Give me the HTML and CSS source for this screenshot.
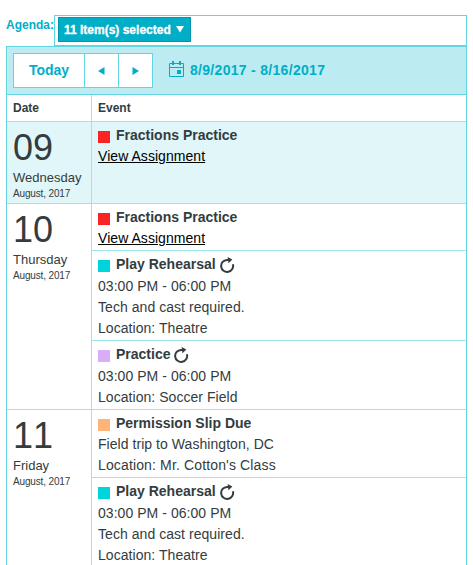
FILE: index.html
```
<!DOCTYPE html>
<html lang="en">
<head>
<meta charset="utf-8">
<title>Agenda</title>
<link rel="stylesheet" href="styles.css">
</head>
<body>
<svg width="0" height="0" class="defs">
  <symbol id="repeat" viewBox="0 0 16 17">
    <path d="M8 3.9H7A6 6 0 1 0 12.9 8.2" fill="none" stroke="#333c3e" stroke-width="2"/>
    <path d="M7.6 .9L12.4 3.6L8.4 7.2Z" fill="#333c3e"/>
  </symbol>
</svg>
<div class="filter">
  <label class="filter-label"><span class="t">Agenda:</span></label>
  <div class="filter-box"><button class="select"><span class="t select-text">11 Item(s) selected</span><svg class="caret" width="8" height="7" viewBox="0 0 8 7"><path d="M0 0h8L4 6.5z" fill="#fff"/></svg></button></div>
</div>
<main class="panel">
  <div class="toolbar">
    <div class="nav">
      <button class="today"><span class="t">Today</span></button>
      <button class="step"><svg width="7" height="8" viewBox="0 0 7 8"><path d="M6.5 0v8L0 4z" fill="#00aec7"/></svg></button>
      <button class="step"><svg width="7" height="8" viewBox="0 0 7 8"><path d="M.5 0v8L7 4z" fill="#00aec7"/></svg></button>
    </div>
    <svg class="cal" width="15" height="16" viewBox="0 0 15 16"><path d="M.5 2.5h14v13H.5zM.5 6.5h14" fill="none" stroke="#00aec7"/><path d="M3 0h2v4H3zM10 0h2v4h-2zM8 9h4v4H8z" fill="#00aec7"/></svg>
    <span class="range"><span class="t">8/9/2017 - 8/16/2017</span></span>
  </div>
  <div class="row head"><div class="date">Date</div><div class="event">Event</div></div>
  <section class="row current">
    <div class="date"><div class="num">09</div><div class="weekday">Wednesday</div><div class="month">August, 2017</div></div>
    <div class="events">
      <article class="event"><h3><i class="swatch red"></i><span class="t">Fractions Practice</span></h3><p><a href="#">View Assignment</a></p></article>
    </div>
  </section>
  <section class="row">
    <div class="date"><div class="num">10</div><div class="weekday">Thursday</div><div class="month">August, 2017</div></div>
    <div class="events">
      <article class="event"><h3><i class="swatch red"></i><span class="t">Fractions Practice</span></h3><p><a href="#">View Assignment</a></p></article>
      <article class="event"><h3 class="repeats"><i class="swatch teal"></i><span class="t">Play Rehearsal</span><svg class="repeat"><use href="#repeat"/></svg></h3><p>03:00 PM - 06:00 PM</p><p>Tech and cast required.</p><p>Location: Theatre</p></article>
      <article class="event"><h3 class="repeats"><i class="swatch purple"></i><span class="t">Practice</span><svg class="repeat"><use href="#repeat"/></svg></h3><p>03:00 PM - 06:00 PM</p><p>Location: Soccer Field</p></article>
    </div>
  </section>
  <section class="row">
    <div class="date"><div class="num">11</div><div class="weekday">Friday</div><div class="month">August, 2017</div></div>
    <div class="events">
      <article class="event"><h3><i class="swatch orange"></i><span class="t">Permission Slip Due</span></h3><p>Field trip to Washington, DC</p><p class="wide">Location: Mr. Cotton's Class</p></article>
      <article class="event"><h3 class="repeats"><i class="swatch teal"></i><span class="t">Play Rehearsal</span><svg class="repeat"><use href="#repeat"/></svg></h3><p>03:00 PM - 06:00 PM</p><p>Tech and cast required.</p><p>Location: Theatre</p></article>
    </div>
  </section>
</main>
</body>
</html>
```
FILE: styles.css
```
* { box-sizing: border-box; }
html { overflow: hidden; }
body {
  margin: 0;
  padding: 15px 6px 0;
  height: 565px;
  overflow: hidden;
  background: #fff;
  color: #333c3e;
  font: 14px/21px "Liberation Sans", Arial, sans-serif;
}
.defs { display: none; }
button { font: inherit; margin: 0; padding: 0; border: 0; background: #fff; color: inherit; }
svg { flex: none; }

.filter { display: flex; width: 461px; height: 31px; }
.filter-label { width: 48px; color: #00aec7; font-size: 12px; font-weight: bold; white-space: nowrap; }
.filter-box { flex: 1; border: 1px solid #62d5e1; padding: 1px 3px; }
.select {
  display: flex;
  align-items: center;
  width: 133px;
  height: 25px;
  padding-left: 5px;
  border: 1px solid #0097ad;
  background: #00aec7;
  color: #fff;
  font-size: 12px;
  font-weight: bold;
  white-space: nowrap;
}
.select-text { width: 107px; padding-top: 1px; text-align: left; -webkit-text-stroke: .3px #fff; }
.caret { margin-left: 5px; }

.panel { width: 461px; border: 1px solid #62d5e1; }
.toolbar {
  display: flex;
  align-items: center;
  height: 48px;
  padding: 0 6px 1px;
  border-bottom: 1px solid #62d5e1;
  background: #bcecf1;
  color: #00aec7;
  font-weight: bold;
}
.range { letter-spacing: .3px; }
.nav { display: flex; height: 35px; border: 1px solid #62d5e1; background: #fff; }
.today { width: 71px; border-right: 1px solid #62d5e1; }
.step { width: 34px; display: flex; align-items: center; justify-content: center; padding-top: 2px; }
.step + .step { width: 33px; }
.today + .step { border-right: 1px solid #62d5e1; }
.cal { margin: 0 6px 2px 16px; }

.row { display: flex; border-bottom: 1px solid #9be5eb; }
.date { flex: none; width: 85px; padding-left: 6px; border-right: 1px solid #9be5eb; white-space: nowrap; }
.head { height: 27px; font-size: 12px; font-weight: bold; line-height: 26px; }
.head .event { padding: 0 6px; }
.events { flex: 1; }
.current { height: 82px; background: #e0f6f9; }
.num { padding-top: 7px; height: 46px; font-size: 36px; line-height: 38px; font-kerning: none; }
.weekday { font-size: 13px; line-height: 20px; }
.month { font-size: 10px; line-height: 11px; letter-spacing: -.15px; }

.event { padding: 3px 6px 1px; }
.event + .event { border-top: 1px solid #9be5eb; }
h3, p { margin: 0; font-size: 14px; white-space: nowrap; }
p { letter-spacing: .05px; }
.wide { letter-spacing: .14px; }
h3 { display: flex; height: 21px; }
.repeats { height: 22px; }
a { color: #000; }
.swatch { width: 12px; height: 12px; margin: 6px 6px 0 0; }
.red { background: #f92525; }
.teal { background: #00d4db; }
.purple { background: #dbadf8; }
.orange { background: #ffb47c; }
.repeat { width: 16px; height: 17px; margin: 2px 0 0 4px; }
```
